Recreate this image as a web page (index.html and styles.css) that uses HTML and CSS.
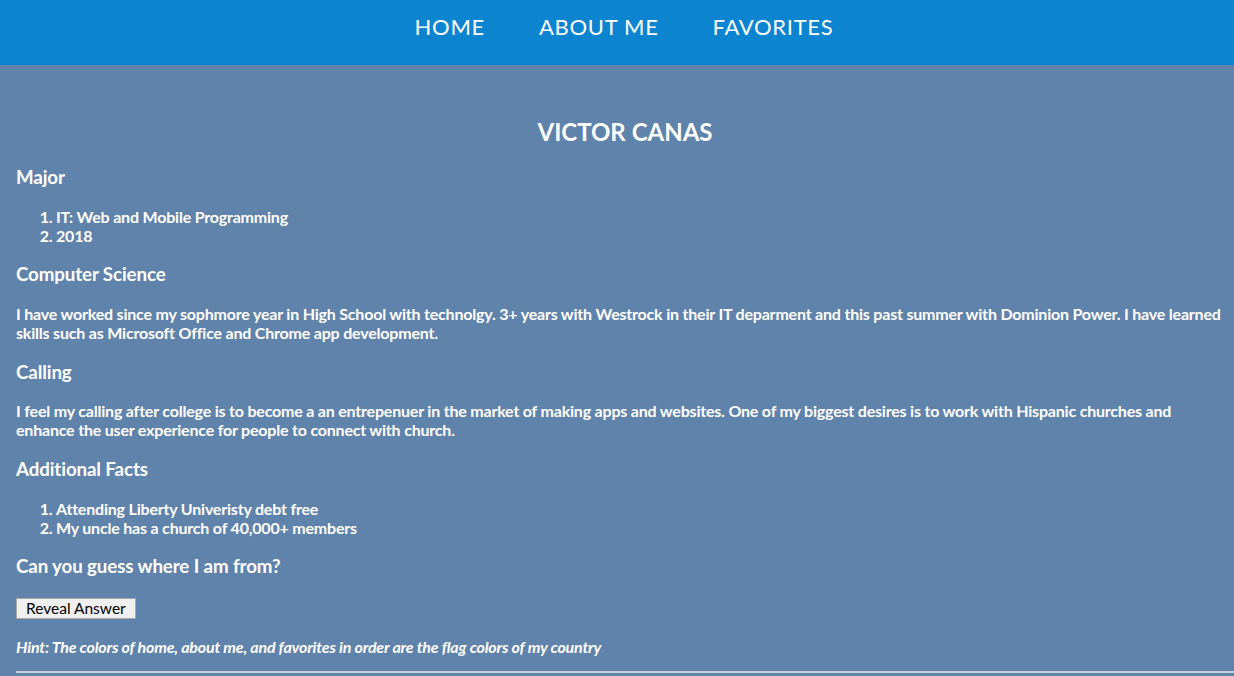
FILE: index.html
```html
<!DOCTYPE html>
<html>
<head>
<meta charset="utf-8">
<title>Victor Canas</title>
<link rel="stylesheet" href="styles.css">
</head>
<body>
<nav class="nav">
  <a class="nav-link" href="#">HOME</a>
  <a class="nav-link" href="#">ABOUT ME</a>
  <a class="nav-link" href="#">FAVORITES</a>
</nav>
<main class="content">
  <h2 class="title">VICTOR CANAS</h2>
  <h3 class="heading">Major</h3>
  <ol class="list">
    <li>IT: Web and Mobile Programming</li>
    <li>2018</li>
  </ol>
  <h3 class="heading">Computer Science</h3>
  <p class="text">I have worked since my sophmore year in High School with technolgy. 3+ years with Westrock in their IT deparment and this past summer with Dominion Power. I have learned skills such as Microsoft Office and Chrome app development.</p>
  <h3 class="heading">Calling</h3>
  <p class="text">I feel my calling after college is to become a an entrepenuer in the market of making apps and websites. One of my biggest desires is to work with Hispanic churches and enhance the user experience for people to connect with church.</p>
  <h3 class="heading">Additional Facts</h3>
  <ol class="list">
    <li>Attending Liberty Univeristy debt free</li>
    <li>My uncle has a church of 40,000+ members</li>
  </ol>
  <h3 class="heading">Can you guess where I am from?</h3>
  <div class="btn-row"><button class="btn">Reveal Answer</button></div>
  <p class="hint">Hint: The colors of home, about me, and favorites in order are the flag colors of my country</p>
  <hr class="rule">
</main>
</body>
</html>
```
FILE: styles.css
```css
html, body {
  margin: 0;
  padding: 0;
}
body {
  background: #5f83aa;
  color: #ffffff;
  font-family: "Lato", "Liberation Sans", sans-serif;
  font-weight: 700;
  font-size: 16px;
  letter-spacing: -0.2px;
  overflow: hidden;
}
.nav {
  height: 65px;
  background: #0d84cf;
  display: flex;
  justify-content: center;
  align-items: flex-start;
  gap: 54px;
  padding-left: 14px;
  box-sizing: border-box;
}
.nav-link {
  color: #ffffff;
  text-decoration: none;
  font-family: "Lato", "Open Sans", sans-serif;
  font-weight: 400;
  font-size: 22px;
  letter-spacing: 0.7px;
  line-height: 26px;
  margin-top: 14px;
}
.content {
  padding: 32px 0 0 16px;
}
.title {
  font-size: 24px;
  letter-spacing: 0;
  text-align: center;
  margin: 20px 0;
  line-height: 29px;
}
.heading {
  font-size: 18.72px;
  letter-spacing: -0.1px;
  margin: 18.2px 0;
  line-height: 22.5px;
}
.list {
  margin: 16px 0;
  padding-left: 40px;
  line-height: 19.2px;
}
.text {
  margin: 16px 0;
  line-height: 19.2px;
  padding-right: 8px;
}
.btn-row {
  margin-top: 20px;
}
.btn {
  font-family: "Lato", "Liberation Sans", sans-serif;
  font-weight: 400;
  font-size: 15.5px;
  letter-spacing: 0;
  color: #000;
  background: #f0f0f0;
  border: 1px solid #a9a9a9;
  padding: 0 9px;
  height: 21px;
  line-height: 18px;
}
.hint {
  font-style: italic;
  margin: 18px 0 0 0;
  line-height: 19px;
}
.rule {
  margin: 15px 0 0 0;
  border: none;
  border-top: 2px solid #c9d2dc;
}
```
